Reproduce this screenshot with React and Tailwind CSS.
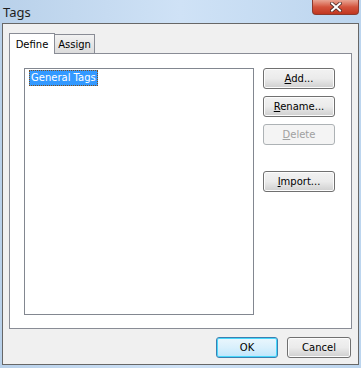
import React from "react";

const Btn = ({ children, className = "", disabled = false, focused = false }) => (
	<button
		type="button"
		className={`h-[21px] rounded-[3px] border text-[10px] leading-none ${
			disabled
				? "border-[#adb2b5] bg-[#f4f4f4] text-[#a0a0a0]"
				: focused
					? "border-[#3c7fb1] bg-gradient-to-b from-[#eaf6fd] via-[#d9f0fc] to-[#bee6fd] text-black shadow-[inset_0_0_0_1px_#48d8fb]"
					: "border-[#707070] bg-gradient-to-b from-[#f2f2f2] via-[#ebebeb] to-[#cfcfcf] text-black shadow-[inset_0_0_0_1px_#fcfcfc]"
		} ${className}`}
	>
		{children}
	</button>
);

const App = () => {
	return (
		<div className="w-[361px] h-[368px] flex flex-col bg-gradient-to-r from-[#b9d1ea] via-[#cfe2f6] to-[#bcd5ee] font-['Tahoma','DejaVu_Sans',sans-serif]">
			<div className="h-[23px] flex items-start justify-between pl-[3px]">
				<span className="mt-[3px] text-[13px] text-[#1e1e1e] font-['Noto_Sans','DejaVu_Sans',sans-serif]">
					Tags
				</span>
				<div className="mr-[2px] w-[47px] h-[15px] rounded-b-[4px] border border-t-0 border-[#8c3a2d] bg-gradient-to-b from-[#e8a493] via-[#d3533c] to-[#c1361f] flex items-center justify-center">
					<svg width="12" height="10" viewBox="0 0 12 10">
						<path
							d="M2 1.5 L10 8.5 M10 1.5 L2 8.5"
							stroke="#4a2a25"
							strokeWidth="3.6"
							strokeLinecap="square"
						/>
						<path
							d="M2 1.5 L10 8.5 M10 1.5 L2 8.5"
							stroke="#ffffff"
							strokeWidth="2"
							strokeLinecap="square"
						/>
					</svg>
				</div>
			</div>
			<div className="ml-[2px] mr-[2px] h-[342px] border border-[#676767] bg-[#f0f0f0] flex flex-col">
				<div className="pl-[6px] pt-[8px] flex items-end">
					<div className="h-[21px] w-[46px] justify-center border border-b-0 border-[#898c95] bg-white text-[10px] flex items-center pt-[1px] relative top-[1px] z-10">
						Define
					</div>
					<div className="h-[19px] w-[40px] justify-center border border-l-0 border-b-0 border-[#898c95] bg-gradient-to-b from-[#f2f2f2] to-[#dcdcdc] text-[10px] flex items-center">
						Assign
					</div>
				</div>
				<div className="ml-[6px] mr-[6px] h-[276px] border border-[#898c95] bg-white flex pl-[14px] pt-[14px] pb-[13px] pr-[14px] gap-[9px]">
					<div className="w-[230px] border border-[#828790] p-[1px]">
						<div className="w-fit ml-[3px] px-[1px] h-[16px] leading-[14px] text-[10px] text-white bg-[#3399ff] border border-dotted border-[#7f4f1c]">
							General Tags
						</div>
					</div>
					<div className="flex flex-col gap-[7px] w-[72px]">
						<Btn>
							<span className="underline">A</span>dd...
						</Btn>
						<Btn>
							<span className="underline">R</span>ename...
						</Btn>
						<Btn disabled>
							<span className="underline">D</span>elete
						</Btn>
						<Btn className="mt-[19px]">
							<span className="underline">I</span>mport...
						</Btn>
					</div>
				</div>
				<div className="flex justify-end gap-[9px] pr-[7px] pt-[8px]">
					<Btn focused className="w-[62px]">
						OK
					</Btn>
					<Btn className="w-[64px]">Cancel</Btn>
				</div>
			</div>
		</div>
	);
};

export default App;
